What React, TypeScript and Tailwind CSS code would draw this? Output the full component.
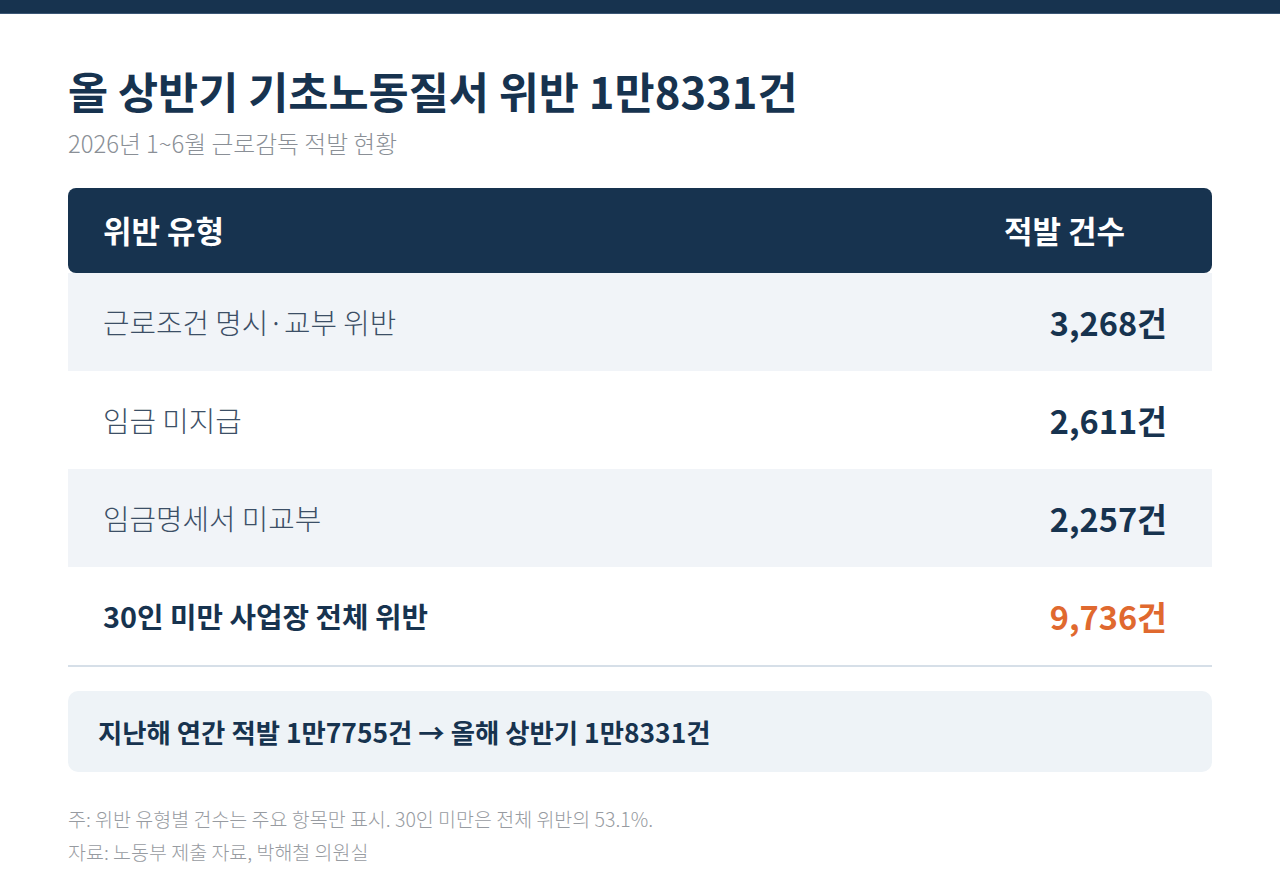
import React from "react";

const rows = [
  { label: "근로조건 명시·교부 위반", value: "3,268건", bg: "bg-[#f1f4f8]" },
  { label: "임금 미지급", value: "2,611건", bg: "bg-white" },
  { label: "임금명세서 미교부", value: "2,257건", bg: "bg-[#f1f4f8]" },
];

export default function App() {
  return (
    <div
      className="w-[1280px] h-[896px] bg-white overflow-hidden"
      style={{ fontFamily: '"Noto Sans CJK KR", "Noto Sans", sans-serif' }}
    >
      <div className="h-[14px] bg-[#17334f] border-b border-[#3b5675]" />
      <div className="px-[68px] pt-[48px]">
        <h1 className="text-[43.6px] leading-[56px] font-bold text-[#17334f]">
          올 상반기 기초노동질서 위반 1만8331건
        </h1>
        <p className="mt-[9px] text-[23.8px] leading-[32px] font-light text-[#8a8f96]">
          2026년 1~6월 근로감독 적발 현황
        </p>

        <div className="mt-[29px]">
          <div className="h-[85px] bg-[#17334f] rounded-[8px] flex items-center justify-between pl-[35px] pr-[87px]">
            <span className="text-[31px] font-bold text-white">위반 유형</span>
            <span className="text-[31px] font-bold text-white">적발 건수</span>
          </div>
          {rows.map((r) => (
            <div
              key={r.label}
              className={`${r.bg} h-[98px] flex items-center justify-between pl-[35px] pr-[45px]`}
            >
              <span className="text-[28.8px] font-light text-[#3c4f66]">{r.label}</span>
              <span className="text-[32.5px] font-bold text-[#17334f]">{r.value}</span>
            </div>
          ))}
          <div className="h-[100px] flex items-center justify-between pl-[35px] pr-[45px] border-b-2 border-[#d6dfe8]">
            <span className="text-[28.8px] font-bold text-[#17334f]">30인 미만 사업장 전체 위반</span>
            <span className="text-[32.5px] font-bold text-[#e0692f]">9,736건</span>
          </div>
        </div>

        <div className="mt-[24px] h-[81px] rounded-[10px] bg-[#eef3f7] flex items-center pl-[30px]">
          <span className="text-[26.4px] font-bold text-[#17334f]">
            지난해 연간 적발 1만7755건 → 올해 상반기 1만8331건
          </span>
        </div>

        <div className="mt-[30px] text-[19.5px] font-light text-[#979ba1] leading-[33px]">
          <p>주: 위반 유형별 건수는 주요 항목만 표시. 30인 미만은 전체 위반의 53.1%.</p>
          <p>자료: 노동부 제출 자료, 박해철 의원실</p>
        </div>
      </div>
    </div>
  );
}
